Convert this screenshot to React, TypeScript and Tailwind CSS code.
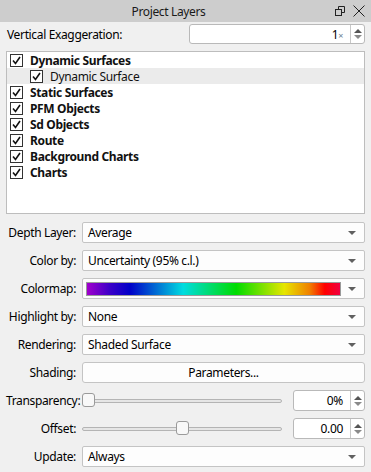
import React from "react";

const Arrow = () => (
  <svg width="8" height="4" viewBox="0 0 8 4" className="shrink-0 mr-[1px]">
    <path d="M0 0 H8 L4 4 Z" fill="#606060" />
  </svg>
);

const Check = () => (
  <div className="w-[13px] h-[13px] border border-[#333] bg-white flex items-center justify-center shrink-0">
    <svg width="9" height="9" viewBox="0 0 9 9">
      <path d="M1 4.5 L3.5 7.5 L8 1" fill="none" stroke="#111" strokeWidth="1.6" />
    </svg>
  </div>
);

const SpinArrows = () => (
  <div className="w-[14px] h-full border-l border-[#c8c8c8] flex flex-col items-center justify-center gap-[2px]">
    <svg width="8" height="4" viewBox="0 0 8 4"><path d="M0 4 L4 0 L8 4 Z" fill="#555" /></svg>
    <svg width="8" height="4" viewBox="0 0 8 4"><path d="M0 0 L8 0 L4 4 Z" fill="#8a8a8a" /></svg>
  </div>
);

const Label = ({ children }: { children: React.ReactNode }) => (
  <div className="w-[71px] shrink-0 text-right pr-[1px] pt-[1px] whitespace-nowrap">{children}</div>
);

const Combo = ({ text }: { text: string }) => (
  <div className="flex-1 h-full bg-[#fdfdfd] border border-[#c4c4c4] rounded-[2px] flex items-center pl-[5px] pr-[7px]">
    <span className="flex-1 whitespace-nowrap pt-[1px]">{text}</span>
    <Arrow />
  </div>
);

const Slider = ({ pos }: { pos: number }) => (
  <div className="flex-1 relative h-full flex items-center mr-[6px]">
    <div className="w-full h-[4px] rounded-[2px] border border-[#b4b4b4] bg-[#e6e6e6]" />
    <div
      className="absolute top-[3px] w-[13px] h-[14px] rounded-[3px] border border-[#9a9a9a] bg-[#f8f8f8]"
      style={{ left: pos }}
    />
  </div>
);

const SpinBox = ({ text, w }: { text: React.ReactNode; w: string }) => (
  <div className={`${w} h-full bg-white border border-[#b9b9b9] rounded-[3px] flex items-center`}>
    <div className="flex-1 text-right pr-[7px] pt-[1px] whitespace-nowrap">{text}</div>
    <SpinArrows />
  </div>
);

export default function App() {
  const items: { t: string; sub?: boolean }[] = [
    { t: "Dynamic Surfaces" },
    { t: "Dynamic Surface", sub: true },
    { t: "Static Surfaces" },
    { t: "PFM Objects" },
    { t: "Sd Objects" },
    { t: "Route" },
    { t: "Background Charts" },
    { t: "Charts" },
  ];
  return (
    <div
      className="w-[371px] h-[472px] bg-[#f0f0f0] overflow-hidden text-[12px] tracking-[-0.35px] text-[#000] leading-none"
      style={{ fontFamily: '"Noto Sans", "Open Sans", sans-serif' }}
    >
      <div className="h-[22px] bg-[#cdcdcd] flex items-center">
        <div className="flex-1 text-center text-[#1a1a1a] pl-[2px] pt-[1px]">Project Layers</div>
        <div className="flex items-center gap-[8px] pr-[6px]">
          <svg width="10" height="10" viewBox="0 0 10 10">
            <rect x="0.5" y="3.5" width="6" height="6" fill="none" stroke="#222" />
            <path d="M3.5 3.5 V0.5 H9.5 V6.5 H6.5" fill="none" stroke="#222" />
          </svg>
          <svg width="12" height="12" viewBox="0 0 12 12">
            <path d="M0.5 0.5 L11.5 11.5 M11.5 0.5 L0.5 11.5" stroke="#222" strokeWidth="1" />
          </svg>
        </div>
      </div>

      <div className="px-[6px] pt-[2px]">
        <div className="h-[20px] flex items-center">
          <div className="flex-1 pl-[1px] pt-[1px]">Vertical Exaggeration:</div>
          <SpinBox
            w="w-[176px]"
            text={
              <span>
                1<span className="text-[9px] text-[#6b7f95]">×</span>
              </span>
            }
          />
        </div>

        <div className="mt-[7px] h-[163px] bg-white border border-[#bdbdbd]">
          {items.map((it, i) => (
            <div
              key={i}
              className={`h-[16px] flex items-center ${it.sub ? "pl-[23px] bg-[#ebebeb] font-normal" : "pl-[3px] font-bold"}`}
            >
              <Check />
              <span className="ml-[7px] text-[#111] whitespace-nowrap pt-[1px]">{it.t}</span>
            </div>
          ))}
        </div>

        <div className="mt-[8px] flex flex-col gap-[7px]">
          <div className="h-[21px] flex items-center gap-[5px]">
            <Label>Depth Layer:</Label>
            <Combo text="Average" />
          </div>
          <div className="h-[21px] flex items-center gap-[5px]">
            <Label>Color by:</Label>
            <Combo text="Uncertainty (95% c.l.)" />
          </div>
          <div className="h-[21px] flex items-center gap-[5px]">
            <Label>Colormap:</Label>
            <div className="flex-1 h-full bg-[#fdfdfd] border border-[#c4c4c4] rounded-[2px] flex items-center pl-[3px] pr-[7px]">
              <div className="flex-1 h-[14px] border border-[#9a9a9a] mr-[7px] bg-[linear-gradient(to_right,#a100cc_0%,#3c00c8_9%,#0000c8_17%,#00dce0_38%,#00dc00_59%,#e6e600_78%,#f08000_88%,#ff0000_94%,#f00040_100%)]" />
              <Arrow />
            </div>
          </div>
          <div className="h-[21px] flex items-center gap-[5px]">
            <Label>Highlight by:</Label>
            <Combo text="None" />
          </div>
          <div className="h-[21px] flex items-center gap-[5px]">
            <Label>Rendering:</Label>
            <Combo text="Shaded Surface" />
          </div>
          <div className="h-[21px] flex items-center gap-[5px]">
            <Label>Shading:</Label>
            <div className="flex-1 h-full bg-[#fdfdfd] border border-[#c4c4c4] rounded-[3px] flex items-center justify-center pt-[1px]">
              Parameters...
            </div>
          </div>
          <div className="h-[21px] flex items-center gap-[5px]">
            <Label>Transparency:</Label>
            <Slider pos={0} />
            <SpinBox w="w-[72px]" text="0%" />
          </div>
          <div className="h-[21px] flex items-center gap-[5px]">
            <Label>Offset:</Label>
            <Slider pos={94} />
            <SpinBox w="w-[72px]" text="0.00" />
          </div>
          <div className="h-[21px] flex items-center gap-[5px]">
            <Label>Update:</Label>
            <Combo text="Always" />
          </div>
        </div>
      </div>
    </div>
  );
}
